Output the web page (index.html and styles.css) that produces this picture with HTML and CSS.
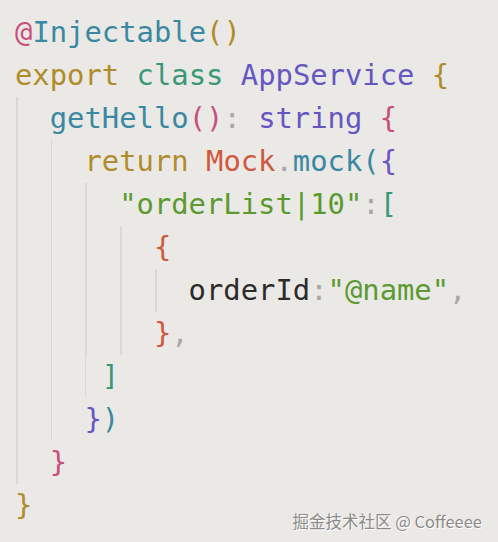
FILE: index.html
```html
<!DOCTYPE html>
<html>
<head>
<meta charset="utf-8">
<link rel="stylesheet" href="styles.css">
</head>
<body>
<div class="code">
  <div class="line"><span class="pk">@</span><span class="tl">Injectable</span><span class="gd">()</span></div>
  <div class="line"><span class="gd">export</span> <span class="gt">class</span> <span class="pu">AppService</span> <span class="gd">{</span></div>
  <div class="line"><span class="ind"></span><span class="tl">getHello</span><span class="pk">()</span><span class="gr">:</span> <span class="pu">string</span> <span class="pk">{</span></div>
  <div class="line"><span class="ind"></span><span class="ind"></span><span class="gd">return</span> <span class="ro">Mock</span><span class="gr">.</span><span class="tl">mock(</span><span class="pu">{</span></div>
  <div class="line"><span class="ind"></span><span class="ind"></span><span class="ind"></span><span class="sg">"orderList|10"</span><span class="gr">:</span><span class="gt">[</span></div>
  <div class="line"><span class="ind"></span><span class="ind"></span><span class="ind"></span><span class="ind"></span><span class="ro">{</span></div>
  <div class="line"><span class="ind"></span><span class="ind"></span><span class="ind"></span><span class="ind"></span><span class="ind"></span><span class="tx">orderId</span><span class="gr">:</span><span class="sg">"@name"</span><span class="gr">,</span></div>
  <div class="line"><span class="ind"></span><span class="ind"></span><span class="ind"></span><span class="ind"></span><span class="ro">}</span><span class="gr">,</span></div>
  <div class="line"><span class="ind"></span><span class="ind"></span><span class="ind half"></span><span class="gt">]</span></div>
  <div class="line"><span class="ind"></span><span class="ind"></span><span class="pu">}</span><span class="tl">)</span></div>
  <div class="line"><span class="ind"></span><span class="pk">}</span></div>
  <div class="line"><span class="gd">}</span></div>
</div>
<div class="mark">掘金技术社区 @ Coffeeee</div>
</body>
</html>
```
FILE: styles.css
```css
html, body {
  margin: 0;
  padding: 0;
  background: #ebe9e6;
}
body {
  width: 498px;
  height: 542px;
  position: relative;
  overflow: hidden;
}
.code {
  padding: 11px 0 0 15px;
  font-family: "DejaVu Sans Mono", monospace;
  font-size: 28.85px;
  color: #2b2b2b;
}
.line {
  height: 43px;
  line-height: 43px;
  white-space: pre;
}
.ind {
  display: inline-block;
  vertical-align: top;
  width: 2ch;
  height: 43px;
  background: linear-gradient(to right, transparent 1px, #dad8d4 1px, #dad8d4 2.5px, transparent 2.5px);
}
.ind.half {
  width: 1ch;
}
.pk { color: #c94f7c; }
.tl { color: #3a88a2; }
.gd { color: #b08c2a; }
.gt { color: #3a9877; }
.pu { color: #6656c1; }
.ro { color: #cf583d; }
.sg { color: #5a9a30; }
.gr { color: #a9a8a6; }
.tx { color: #2b2b2b; }
.mark {
  position: absolute;
  right: 16px;
  bottom: 9px;
  font-family: "Noto Sans CJK SC", "Noto Sans", sans-serif;
  font-size: 16.5px;
  color: #8c8b89;
  text-shadow: 1px 1px 0 #ffffff;
}
```
